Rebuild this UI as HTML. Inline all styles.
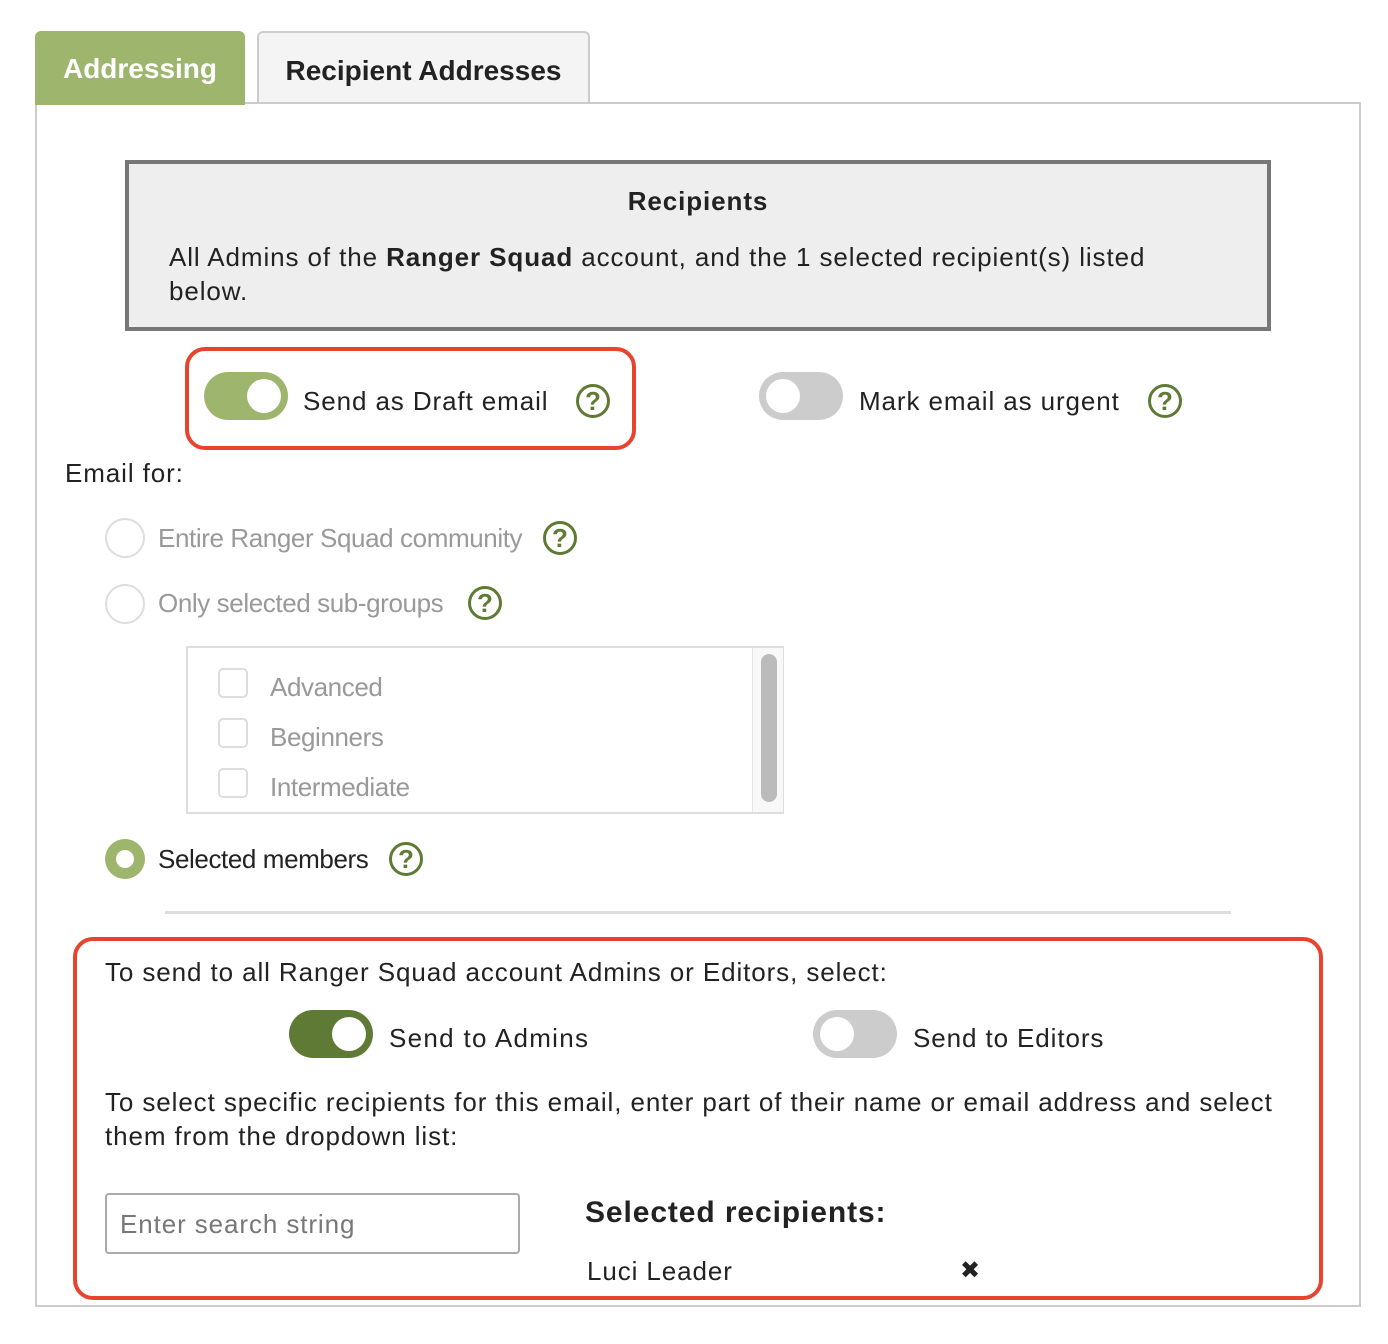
<!DOCTYPE html>
<html><head><style>
body{margin:0;width:1388px;height:1344px;background:#fff;font-family:"Liberation Sans",sans-serif;color:#222;position:relative;overflow:hidden}
.a{position:absolute;white-space:nowrap}
.t{font-size:26px;line-height:30px;transform:translateY(-15px);letter-spacing:0.9px}
.n{letter-spacing:-0.4px}
.tog{position:absolute;width:84px;height:48px;border-radius:24px}
.tog i{position:absolute;top:7px;width:34px;height:34px;border-radius:50%;background:#fff}
.help{position:absolute;width:34px;height:34px;border:3px solid #5e7a34;border-radius:50%;box-sizing:border-box;color:#5e7a34;font-weight:bold;font-size:26px;line-height:29px;text-align:center;transform:translate(-17px,-17px)}
.rad{position:absolute;width:40px;height:40px;border:2px solid #ddd;border-radius:50%;box-sizing:border-box;transform:translate(-20px,-20px)}
.cb{position:absolute;left:218px;width:30px;height:30px;border:2px solid #ddd;border-radius:5px;box-sizing:border-box}
.red{position:absolute;border:4px solid #e8432d;border-radius:20px;box-sizing:border-box}
</style></head><body>
<div class="a" style="left:35px;top:31px;width:210px;height:73px;background:#9db56c;border-radius:6px 6px 0 0;color:#fff;font-weight:bold;font-size:28px;line-height:76px;text-align:center">Addressing</div>
<div class="a" style="left:257px;top:31px;width:333px;height:72px;background:#f4f4f4;border:2px solid #ccc;border-bottom:none;border-radius:6px 6px 0 0;box-sizing:border-box;font-weight:bold;font-size:28px;line-height:76px;text-align:center">Recipient Addresses</div>
<div class="a" style="left:35px;top:102px;width:1326px;height:1205px;border:2px solid #ccc;box-sizing:border-box"></div>
<div class="a" style="left:35px;top:102px;width:210px;height:3px;background:#9db56c"></div>

<div class="a" style="left:125px;top:160px;width:1146px;height:171px;background:#eee;border:4px solid #777;box-sizing:border-box"></div>
<div class="a t" style="left:125px;width:1146px;top:201px;text-align:center;font-weight:bold">Recipients</div>
<div class="a t" style="left:169px;top:257px">All Admins of the <b>Ranger Squad</b> account, and the 1 selected recipient(s) listed</div>
<div class="a t" style="left:169px;top:291px">below.</div>

<div class="red" style="left:185px;top:347px;width:451px;height:103px"></div>
<div class="tog" style="left:204px;top:372px;background:#9db56c"><i style="left:43px"></i></div>
<div class="a t" style="left:303px;top:401px">Send as Draft email</div>
<div class="help" style="left:593px;top:401px">?</div>
<div class="tog" style="left:759px;top:372px;background:#ccc"><i style="left:7px"></i></div>
<div class="a t" style="left:859px;top:401px">Mark email as urgent</div>
<div class="help" style="left:1165px;top:401px">?</div>

<div class="a t" style="left:65px;top:473px">Email for:</div>
<div class="rad" style="left:125px;top:538px"></div>
<div class="a t n" style="left:158px;top:538px;color:#999">Entire Ranger Squad community</div>
<div class="help" style="left:560px;top:538px">?</div>
<div class="rad" style="left:125px;top:604px"></div>
<div class="a t n" style="left:158px;top:603px;color:#999">Only selected sub-groups</div>
<div class="help" style="left:485px;top:603px">?</div>

<div class="a" style="left:186px;top:646px;width:598px;height:168px;border:2px solid #ddd;box-sizing:border-box"></div>
<div class="a" style="left:752px;top:648px;width:30px;height:164px;background:#f8f8f8;border-left:1px solid #e5e5e5"></div>
<div class="a" style="left:761px;top:654px;width:16px;height:148px;background:#bbb;border-radius:8px"></div>
<div class="cb" style="top:668px"></div><div class="a t n" style="left:270px;top:687px;color:#999">Advanced</div>
<div class="cb" style="top:718px"></div><div class="a t n" style="left:270px;top:737px;color:#999">Beginners</div>
<div class="cb" style="top:768px"></div><div class="a t n" style="left:270px;top:787px;color:#999">Intermediate</div>

<div class="a" style="left:105px;top:839px;width:40px;height:40px;border-radius:50%;background:#9db56c"></div>
<div class="a" style="left:116px;top:850px;width:18px;height:18px;border-radius:50%;background:#fff"></div>
<div class="a t n" style="left:158px;top:859px">Selected members</div>
<div class="help" style="left:406px;top:859px">?</div>

<div class="a" style="left:165px;top:911px;width:1066px;height:3px;background:#ddd"></div>

<div class="red" style="left:73px;top:937px;width:1250px;height:363px"></div>
<div class="a t" style="left:105px;top:972px">To send to all Ranger Squad account Admins or Editors, select:</div>
<div class="tog" style="left:289px;top:1010px;background:#5e7a34"><i style="left:43px"></i></div>
<div class="a t" style="left:389px;top:1038px;letter-spacing:1.3px">Send to Admins</div>
<div class="tog" style="left:813px;top:1010px;background:#ccc"><i style="left:7px"></i></div>
<div class="a t" style="left:913px;top:1038px">Send to Editors</div>
<div class="a t" style="left:105px;top:1102px">To select specific recipients for this email, enter part of their name or email address and select</div>
<div class="a t" style="left:105px;top:1136px">them from the dropdown list:</div>
<div class="a" style="left:105px;top:1193px;width:415px;height:61px;border:2px solid #aaa;border-radius:4px;box-sizing:border-box"></div>
<div class="a t" style="left:120px;top:1224px;color:#777">Enter search string</div>
<div class="a" style="left:585px;top:1195px;font-size:30px;line-height:36px;font-weight:bold;letter-spacing:0.9px">Selected recipients:</div>
<div class="a t" style="left:587px;top:1271px">Luci Leader</div>
<div class="a t" style="left:960px;top:1271px;font-size:24px">✖</div>
</body></html>
